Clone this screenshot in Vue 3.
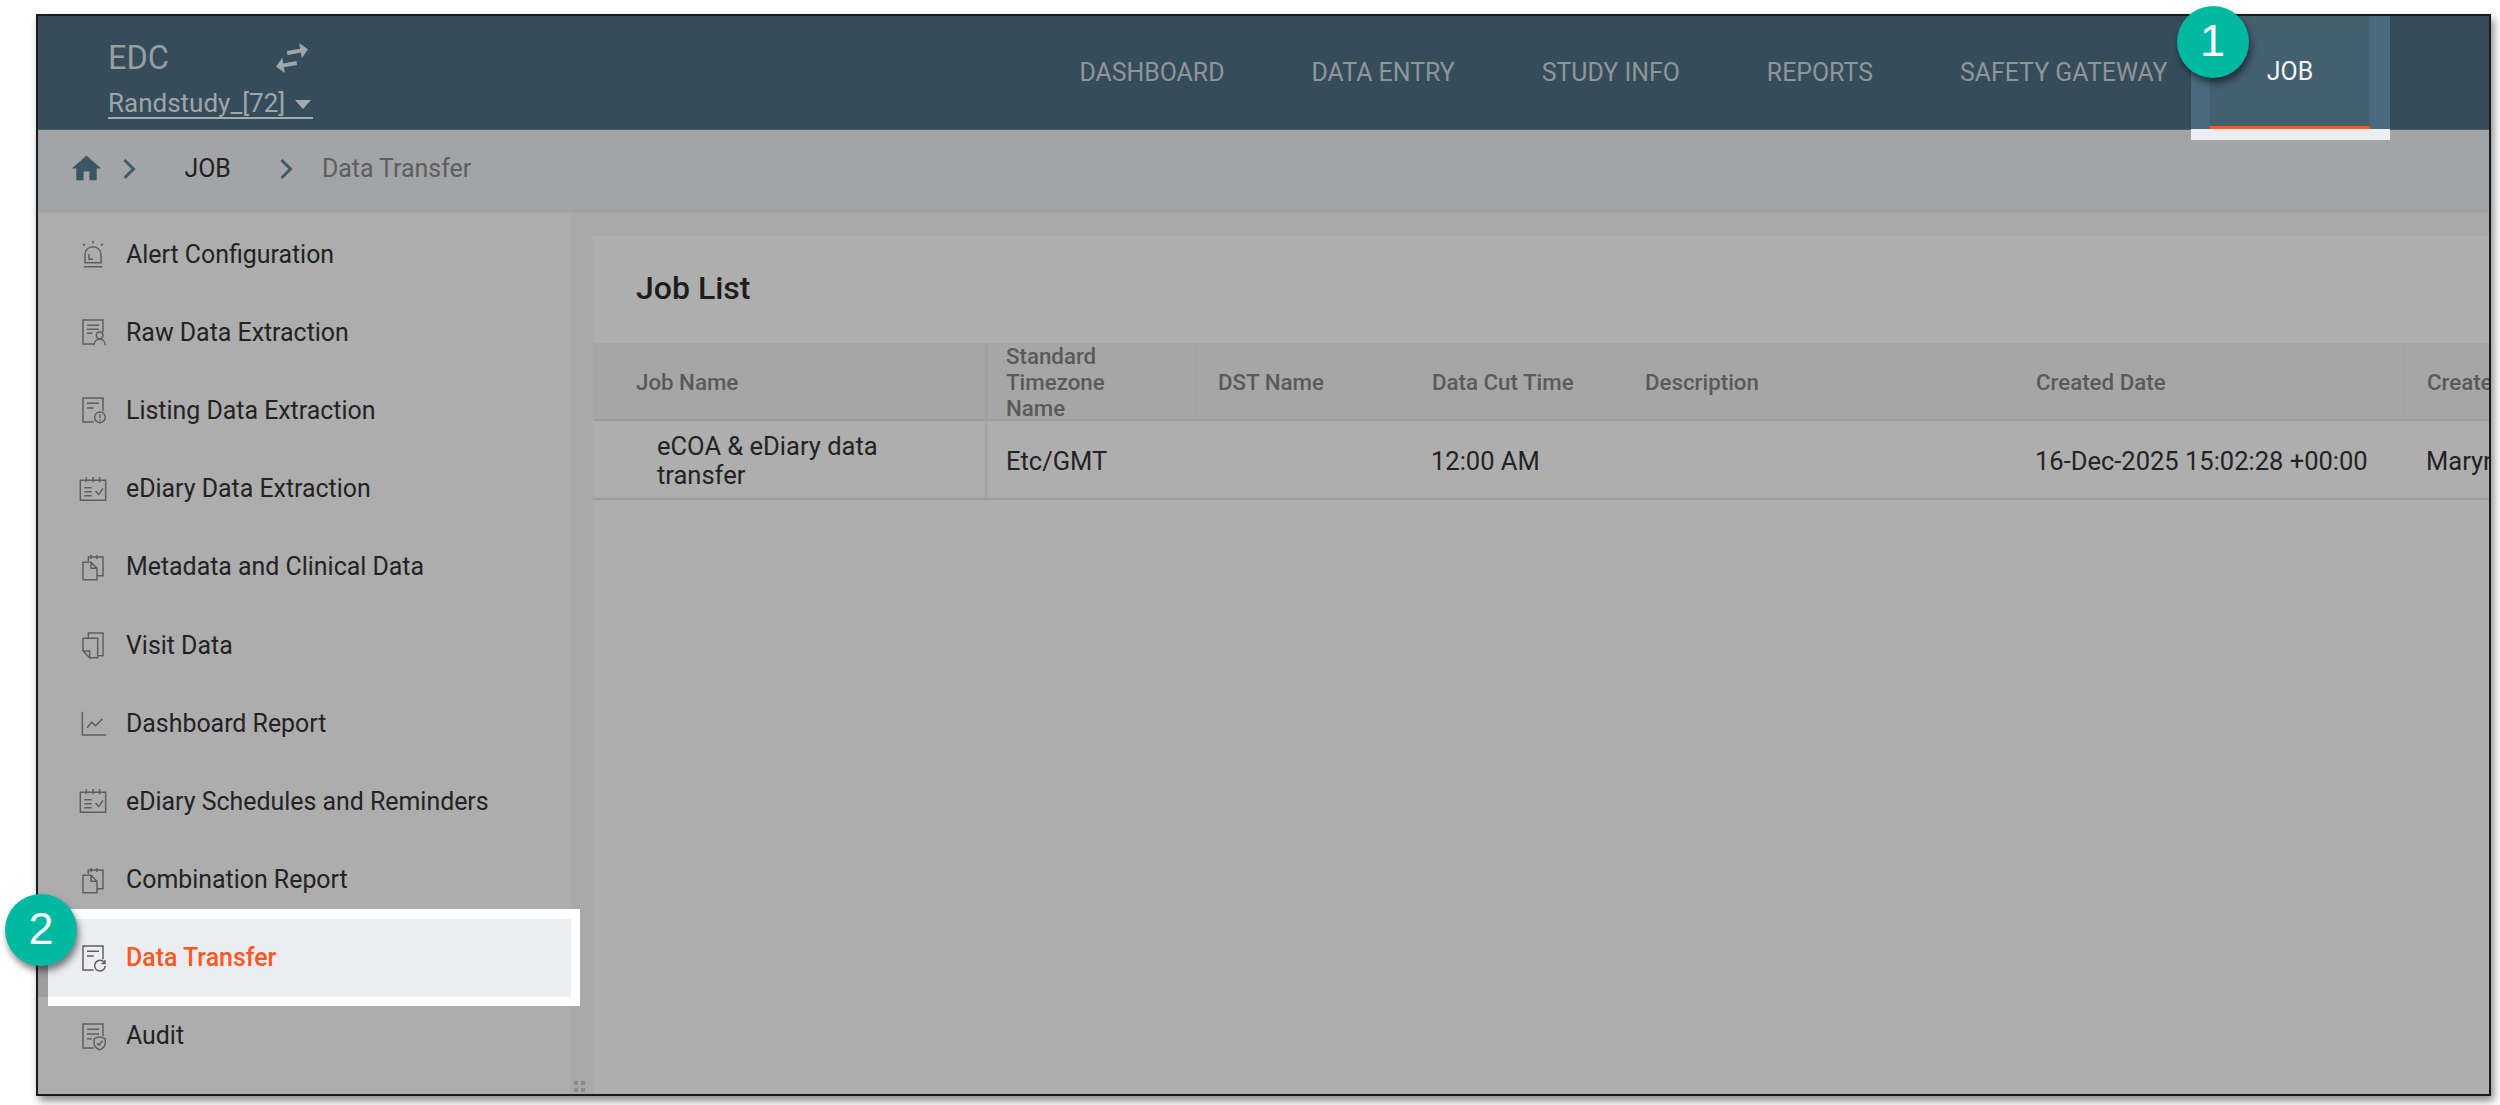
<script setup>
import { ref } from 'vue'

const navItems = ref(['DASHBOARD', 'DATA ENTRY', 'STUDY INFO', 'REPORTS', 'SAFETY GATEWAY'])

// all side menu icons are one stroked path on a 24 grid
const icons = {
  alert: 'M5 21.5h14M6 18.5h12v-6a6 6 0 0 0-12 0zM9 12v4h3M12 2v2.2M4.6 4.4l1.4 1.4M19.4 4.4l-1.4 1.4',
  raw: 'M12.5 21H4.5V3h15v9M7.5 7h9M7.5 10h9M7.5 13h4M19.5 14.5a2.5 2.5 0 1 1-5 0a2.5 2.5 0 1 1 5 0M12.8 22c0-3 2-4.6 4.2-4.6s4.2 1.6 4.2 4.6',
  listing: 'M12.5 21H4.5V3h15v10M7.5 7h9M7.5 10.5h5M21.2 17.5a4 4 0 1 1-8 0a4 4 0 1 1 8 0M17.2 15.2v2.8M17.2 19.2v.8',
  diary: 'M2.5 5.5h19v15h-19zM7 3v4M12 3v4M17 3v4M5.5 11h5.5M5.5 14h5.5M5.5 17h5.5M14 13.5l2.2 2.6 3.3-4.6',
  metadata: 'M8.5 7.5v-3h11v14h-4M10.5 3v3M15 3v3M4.5 8.5h6l4.5 4.5v8.5h-10.5zM10.5 8.5V13h4.5',
  visit: 'M8.5 7V3h11v17h-4M4.5 7h11v14.5h-6l-5-5zM9.5 21.5v-5h-5',
  chart: 'M4 3.5v17.5h18M7.5 15.5l3.5-4 3 2.5 5-5',
  transfer: 'M12.5 21H4.5V3h15v10M7.5 7h9M7.5 10.5h5M20.6 15.6a4 4 0 1 0 .6 2.4M21 13.5v2.6h-2.6',
  audit: 'M12.5 21H4.5V3h15v9M7.5 7h9M7.5 10.5h9M7.5 14h3.5M17 12.5l4.2 1.6v3.4c0 2.3-1.8 3.9-4.2 4.8c-2.4-.9-4.2-2.5-4.2-4.8v-3.4zM15 17.2l1.5 1.7 2.6-3.3'
}

const menu = ref([
  { label: 'Alert Configuration', icon: 'alert' },
  { label: 'Raw Data Extraction', icon: 'raw' },
  { label: 'Listing Data Extraction', icon: 'listing' },
  { label: 'eDiary Data Extraction', icon: 'diary' },
  { label: 'Metadata and Clinical Data', icon: 'metadata' },
  { label: 'Visit Data', icon: 'visit' },
  { label: 'Dashboard Report', icon: 'chart' },
  { label: 'eDiary Schedules and Reminders', icon: 'diary' },
  { label: 'Combination Report', icon: 'metadata' },
  { label: 'Data Transfer', icon: 'transfer', active: true },
  { label: 'Audit', icon: 'audit' }
])

const columns = ref(['Job Name', 'Standard Timezone Name', 'DST Name', 'Data Cut Time', 'Description', 'Created Date', 'Created By'])
const row = ref(['eCOA & eDiary data transfer', 'Etc/GMT', '', '12:00 AM', '', '16-Dec-2025 15:02:28 +00:00', 'Maryn'])
</script>

<template>
  <div class="page">
    <div class="frame">
      <header class="topbar">
        <div class="brand">
          <div class="brand-top">
            <span class="edc">EDC</span>
            <svg class="swap" viewBox="0 0 24 24"><path transform="rotate(-10 12 12)" d="M6.99 11L3 15l3.99 4v-3H14v-2H6.99v-3zM21 9l-3.99-4v3H10v2h7.01v3L21 9z" /></svg>
          </div>
          <div class="study">
            <span>Randstudy_[72]</span>
            <span class="caret"></span>
          </div>
        </div>
        <nav class="nav">
          <a v-for="item in navItems" :key="item" class="nav-item">{{ item }}</a>
          <a class="nav-item job">
            <span class="job-spot"></span>
            <span class="job-text">JOB</span>
          </a>
        </nav>
      </header>

      <div class="crumbs">
        <svg class="home" viewBox="0 0 24 24"><path d="M10 20v-6h4v6h5v-8h3L12 3 2 12h3v8z" /></svg>
        <svg class="chev first" viewBox="0 0 14 22"><path d="M2.5 2l9 9-9 9" /></svg>
        <span class="crumb-job">JOB</span>
        <svg class="chev second" viewBox="0 0 14 22"><path d="M2.5 2l9 9-9 9" /></svg>
        <span class="crumb-now">Data Transfer</span>
      </div>

      <div class="main">
        <aside class="side">
          <div v-for="item in menu" :key="item.label" class="side-item" :class="{ active: item.active }">
            <svg class="side-icon" viewBox="0 0 24 24"><path :d="icons[item.icon]" /></svg>
            <span class="side-label">{{ item.label }}</span>
          </div>
          <svg class="grip" viewBox="0 0 11 11"><path d="M0 0h4v4H0zM7 0h4v4H7zM0 7h4v4H0zM7 7h4v4H7z" /></svg>
        </aside>

        <section class="content">
          <div class="card">
            <h2 class="card-title">Job List</h2>
            <div class="grid head">
              <div v-for="col in columns" :key="col" class="cell">{{ col }}</div>
            </div>
            <div class="grid body">
              <div v-for="(val, i) in row" :key="i" class="cell">{{ val }}</div>
            </div>
          </div>
        </section>
      </div>

      <span class="badge one">1</span>
      <span class="badge two">2</span>
    </div>
  </div>
</template>

<style scoped>
.page {
  height: 1105px;
  box-sizing: border-box;
  padding: 14px 9px 9px 36px;
  background: #fff;
  font-family: Roboto, "Liberation Sans", sans-serif;
  overflow: hidden;
}
.frame {
  position: relative;
  height: 100%;
  box-sizing: border-box;
  border: 2px solid #1b1b1b;
  display: flex;
  flex-direction: column;
  background: #adadad;
  box-shadow: 3px 5px 8px rgba(0, 0, 0, 0.45);
}

.topbar {
  position: relative;
  z-index: 2;
  height: 114px;
  box-sizing: border-box;
  flex: none;
  display: flex;
  background: #354d5a;
  border-bottom: 1px solid #46606c;
}
.brand {
  padding: 21px 0 0 70px;
  color: #979da0;
}
.brand-top {
  display: flex;
  align-items: center;
  height: 42px;
}
.edc {
  font-size: 32.5px;
  width: 161px;
}
.swap {
  width: 46px;
  height: 46px;
  fill: #a0a5a8;
}
.study {
  margin-top: 9px;
  display: flex;
  align-items: center;
  gap: 10px;
  width: 205px;
  height: 29px;
  border-bottom: 2px solid #a5aaad;
  font-size: 26px;
  color: #a0a5a8;
}
.caret {
  border-left: 8px solid transparent;
  border-right: 8px solid transparent;
  border-top: 9px solid #a5aaad;
  margin-top: 3px;
}
.nav {
  margin-left: auto;
  display: flex;
  align-items: center;
  padding-right: 119px;
  height: 113px;
}
.nav-item {
  padding: 0 43.5px;
  height: 100%;
  display: flex;
  align-items: center;
  font-size: 24.9px;
  color: #8f9598;
}
.nav-item.job {
  position: relative;
  justify-content: center;
  box-sizing: border-box;
  width: 160px;
  padding: 0;
  margin-left: -1px;
  color: #f4f5f6;
  background: #435f70;
  border-bottom: 3px solid #ff5722;
}
.job-text {
  position: relative;
}
.job-spot {
  position: absolute;
  top: 0;
  left: -19px;
  right: -20px;
  bottom: -14px;
  box-sizing: border-box;
  border-left: 19px solid #4a6a7e;
  border-right: 20px solid #4a6a7e;
}
.job-spot::after {
  content: "";
  position: absolute;
  left: -19px;
  right: -20px;
  bottom: 0;
  height: 11px;
  background: #ecedf0;
}

.crumbs {
  height: 80px;
  flex: none;
  display: flex;
  align-items: center;
  padding-bottom: 3px;
  box-sizing: border-box;
  background: #a3a4a6;
  box-shadow: 0 2px 3px rgba(0, 0, 0, 0.08);
  position: relative;
  z-index: 1;
  font-size: 24.9px;
}
.home {
  width: 35px;
  height: 35px;
  margin-left: 31px;
  fill: #3a5666;
}
.chev {
  width: 14px;
  height: 22px;
  fill: none;
  stroke: #3e5a6b;
  stroke-width: 3;
}
.chev.first {
  margin-left: 18px;
}
.chev.second {
  margin-left: 48px;
}
.crumb-job {
  margin-left: 48.5px;
  color: #202224;
}
.crumb-now {
  margin-left: 29px;
  color: #5c5e61;
}

.main {
  flex: 1;
  display: flex;
  min-height: 0;
}
.side {
  position: relative;
  width: 533px;
  flex: none;
  padding-top: 5px;
  box-sizing: border-box;
}
.side-item {
  position: relative;
  height: 78.2px;
  display: flex;
  align-items: center;
  padding-left: 39px;
  font-size: 24.9px;
  color: #232323;
}
.side-icon {
  position: relative;
  width: 32px;
  height: 32px;
  flex: none;
  fill: none;
  stroke: #5e5e5e;
  stroke-width: 1.1;
}
.side-label {
  position: relative;
  margin-left: 17px;
}
.side-item.active {
  background: #9d9d9d;
  color: #ff5722;
  font-weight: 500;
}
.side-item.active::before {
  content: "";
  position: absolute;
  top: -10px;
  bottom: -9px;
  left: 10px;
  right: -8.5px;
  background: #ecedf1;
  border: solid #fff;
  border-width: 10px 9px 9px 0;
}
.grip {
  position: absolute;
  right: -14px;
  bottom: 2px;
  width: 11px;
  height: 11px;
  fill: #8b8b8b;
}

.content {
  flex: 1;
  min-width: 0;
  padding: 26px 0 0 22px;
  background: #a9a9a9;
}
.card {
  height: 100%;
  background: #aeaeae;
  overflow: hidden;
}
.card-title {
  margin: 0;
  height: 107px;
  padding: 0 0 3px 43px;
  box-sizing: border-box;
  display: flex;
  align-items: center;
  font-size: 32px;
  font-weight: 500;
  color: #1d1d1d;
}
.grid {
  display: grid;
  grid-template-columns: 392px 210px 214px 213px 391px 391px 200px;
  width: 2011px;
  box-sizing: border-box;
  border-bottom: 2px solid #9c9c9c;
}
.cell {
  display: flex;
  align-items: center;
  padding: 0 22px;
  box-sizing: border-box;
}
.head {
  height: 78px;
  background: #a6a6a6;
  font-size: 22.3px;
  font-weight: 500;
  line-height: 26px;
  color: #5a5a5a;
}
.head .cell:first-child {
  padding-left: 43px;
}
.head .cell + .cell {
  border-left: 1px solid #a3a3a3;
}
.head .cell:nth-child(2) {
  border-left: 3px solid #a0a0a0;
  padding: 0 40px 0 18px;
}
.body {
  height: 79px;
  font-size: 25.5px;
  line-height: 29px;
  color: #232323;
}
.body .cell {
  padding-top: 3px;
}
.body .cell:first-child {
  padding: 2px 64px 0;
  box-shadow: 2px 0 2px rgba(0, 0, 0, 0.08);
}
.body .cell:nth-child(2) {
  padding-left: 21px;
}

.badge {
  position: absolute;
  width: 72px;
  height: 72px;
  padding-bottom: 3px;
  box-sizing: border-box;
  border-radius: 50%;
  background: #00b9a3;
  color: #fff;
  font-family: "Liberation Sans", Arial, sans-serif;
  font-size: 45px;
  display: flex;
  align-items: center;
  justify-content: center;
  box-shadow: 2px 5px 7px rgba(0, 0, 0, 0.5);
  z-index: 3;
}
.badge.one {
  top: -10px;
  left: 2138.5px;
}
.badge.two {
  top: 878px;
  left: -33px;
}
</style>

<style>
body {
  margin: 0;
}
</style>
